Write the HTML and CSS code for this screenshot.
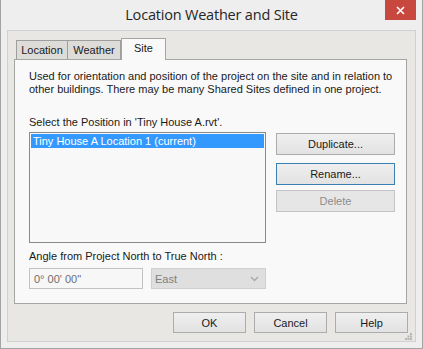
FILE: index.html
```html
<!doctype html>
<html lang="en">
<head>
	<meta charset="UTF-8">
	<title>Location Weather and Site</title>
	<link rel="stylesheet" href="styles.css">
</head>
<body>
	<div class="window">
		<div class="titlebar">
			<span></span>
			<span class="title">Location Weather and Site</span>
			<button class="close" type="button">
				<svg width="9" height="9" viewBox="0 0 9 9"><path d="M1 1 L8 8 M8 1 L1 8" stroke="#fff" stroke-width="1.6"/></svg>
			</button>
		</div>

		<div class="client">
			<div class="tabs">
				<span class="tab tab-location">Location</span>
				<span class="tab tab-weather">Weather</span>
				<span class="tab tab-site active">Site</span>
			</div>

			<div class="panel">
				<p class="desc">Used for orientation and position of the project on the site and in relation to<br>other buildings. There may be many Shared Sites defined in one project.</p>

				<p class="label label-select">Select the Position in 'Tiny House A.rvt'.</p>
				<div class="pick">
					<div class="list">
						<div class="item selected">Tiny House A Location 1 (current)</div>
					</div>
					<div class="side">
						<button class="btn btn-dup" type="button">Duplicate...</button>
						<button class="btn btn-rename focused" type="button">Rename...</button>
						<button class="btn btn-delete" type="button" disabled>Delete</button>
					</div>
				</div>

				<p class="label label-angle">Angle from Project North to True North :</p>
				<div class="angle">
					<input class="field" type="text" value="0° 00' 00&quot;" disabled>
					<div class="combo">
						<span>East</span>
						<svg width="9" height="6" viewBox="0 0 9 6"><path d="M1 1 L4.5 4.5 L8 1" fill="none" stroke="#a9a9a9" stroke-width="1.4"/></svg>
					</div>
				</div>
			</div>

			<div class="footer">
				<button class="btn btn-foot" type="button">OK</button>
				<button class="btn btn-foot" type="button">Cancel</button>
				<button class="btn btn-foot" type="button">Help</button>
				<svg class="grip" width="7" height="7" viewBox="0 0 7 7">
					<rect x="5" y="0" width="2" height="2" fill="#b5b5b5"/>
					<rect x="2.5" y="2.5" width="2" height="2" fill="#b5b5b5"/>
					<rect x="5" y="2.5" width="2" height="2" fill="#b5b5b5"/>
					<rect x="0" y="5" width="2" height="2" fill="#b5b5b5"/>
					<rect x="2.5" y="5" width="2" height="2" fill="#b5b5b5"/>
					<rect x="5" y="5" width="2" height="2" fill="#b5b5b5"/>
				</svg>
			</div>
		</div>
	</div>
</body>
</html>
```

FILE: styles.css
```css
* { box-sizing: border-box; }

body {
	margin: 0;
	background: #ffffff;
	font-family: "Liberation Sans", Arial, sans-serif;
	font-size: 11px;
	color: #1a1a1a;
}

p { margin: 0; }

.window {
	width: 423px;
	height: 349px;
	background: #eeeeee;
	border: 1px solid #a3a3a3;
	border-top: 0;
}

/* title bar */
.titlebar {
	height: 30px;
	display: grid;
	grid-template-columns: 1fr auto 1fr;
	align-items: start;
}
.title {
	font-family: "Open Sans", sans-serif;
	font-size: 14.5px;
	letter-spacing: -0.2px;
	color: #262626;
	line-height: 30px;
}
.close {
	justify-self: end;
	margin-right: 6px;
	width: 31px;
	height: 20px;
	border: 0;
	padding: 0;
	background: #c8473e;
	display: flex;
	align-items: center;
	justify-content: center;
}

/* client area */
.client {
	margin: 0 6px;
	height: 312px;
	background: #e9e7e4;
	border: 1px solid #d0d0d0;
	padding: 7px 7px 0 6px;
}

.tabs {
	display: flex;
	align-items: flex-end;
	height: 21px;
	padding-left: 2px;
}
.tab {
	height: 19px;
	border: 1px solid #9e9e9e;
	border-bottom: 0;
	background: #dedcd9;
	display: flex;
	align-items: center;
	justify-content: center;
	line-height: 1;
	padding-top: 1px;
}
.tab-location { width: 52px; }
.tab-weather { width: 53px; border-left: 0; }
.tab-site { width: 45px; }
.tab.active {
	height: 22px;
	margin-bottom: -1px;
	background: #f9f9f9;
	border-color: #a5a5a5;
	position: relative;
	z-index: 1;
	align-items: flex-start;
	padding-top: 4px;
}

.panel {
	width: 393px;
	height: 245px;
	background: #f9f9f9;
	border: 1px solid #a5a5a5;
	padding: 10px 0 0 14px;
}
.desc { line-height: 13px; white-space: nowrap; }
.label { line-height: 13px; }
.label-select { margin-top: 20px; }

.pick {
	display: flex;
	margin-top: 3px;
	align-items: flex-start;
}
.list {
	width: 237px;
	height: 111px;
	border: 1px solid #8a8a8a;
	background: #f8f8f8;
	padding: 1px;
}
.item {
	height: 14px;
	line-height: 14px;
	padding-left: 2px;
}
.item.selected {
	background: #3399ff;
	color: #ffffff;
}

.side {
	display: flex;
	flex-direction: column;
	margin-left: 10px;
	padding-top: 1px;
}

.btn {
	font-family: inherit;
	font-size: inherit;
	color: #1a1a1a;
	border: 1px solid #acacac;
	background: linear-gradient(#efefef, #e2e2e2);
	padding: 0;
	height: 22px;
}
.side .btn { width: 119px; }
.btn-rename { margin-top: 8px; border-color: #3c7fb1; }
.btn-delete {
	margin-top: 5px;
	color: #8d8d8d;
	background: #e6e6e6;
	border-color: #c4c4c4;
}

.label-angle { margin-top: 7px; }
.angle {
	display: flex;
	gap: 8px;
	margin-top: 5px;
}
.field {
	width: 114px;
	height: 21px;
	border: 1px solid #c2c2c2;
	background: #f7f7f7;
	font-family: inherit;
	font-size: inherit;
	color: #6d6d6d;
	padding: 0 0 0 4px;
}
.combo {
	width: 115px;
	height: 21px;
	border: 1px solid #cfcfcf;
	background: #dfdfdf;
	color: #7e7e7e;
	display: flex;
	align-items: center;
	justify-content: space-between;
	padding: 0 6px 0 3px;
}

.footer {
	display: flex;
	justify-content: flex-end;
	gap: 8px;
	margin-top: 8px;
	position: relative;
}
.btn-foot { width: 73px; height: 21px; }
.grip {
	position: absolute;
	right: -4px;
	top: 21px;
}
```
